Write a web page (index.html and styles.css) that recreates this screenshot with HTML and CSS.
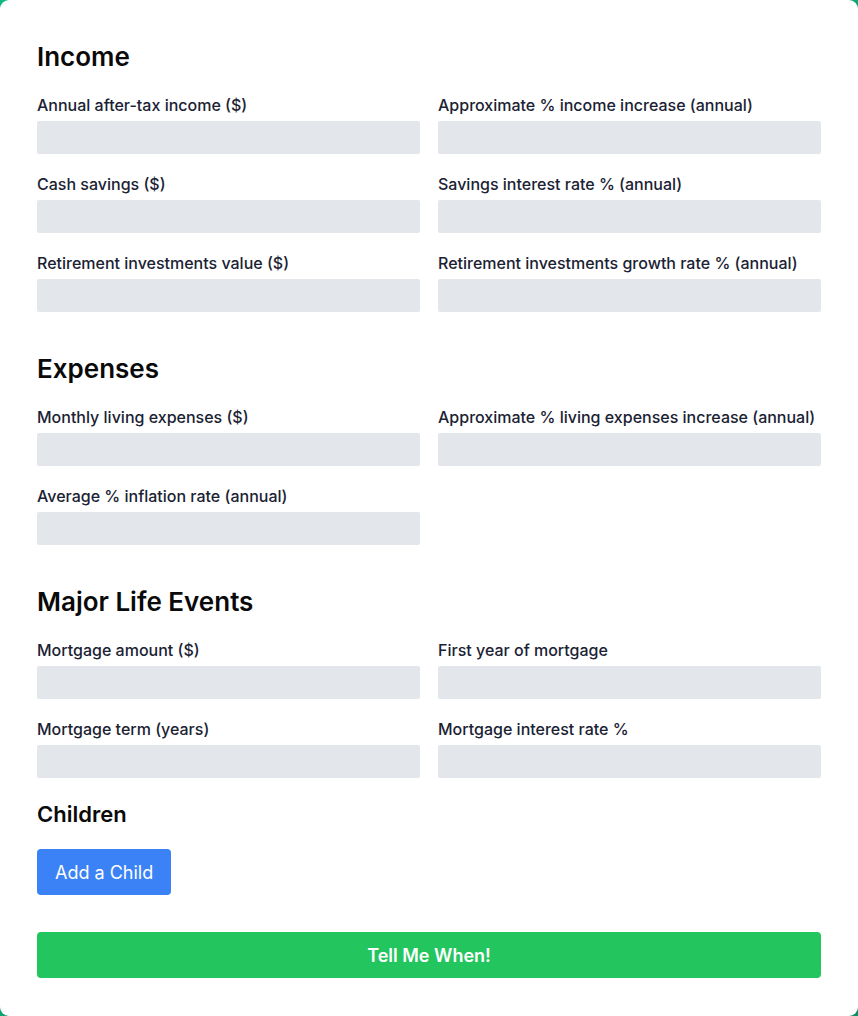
FILE: index.html
```html
<!DOCTYPE html>
<html lang="en">
<head>
  <meta charset="utf-8">
  <meta name="viewport" content="width=device-width, initial-scale=1">
  <title>Financial planner</title>
  <link rel="stylesheet" href="styles.css">
</head>
<body>
  <main class="card">
    <form class="form">
      <section class="section">
        <h2 class="section-title">Income</h2>
        <div class="fields">
          <div class="field">
            <label for="income">Annual after-tax income ($)</label>
            <input id="income" type="text" inputmode="decimal">
          </div>
          <div class="field">
            <label for="income-increase">Approximate % income increase (annual)</label>
            <input id="income-increase" type="text" inputmode="decimal">
          </div>
          <div class="field">
            <label for="savings">Cash savings ($)</label>
            <input id="savings" type="text" inputmode="decimal">
          </div>
          <div class="field">
            <label for="savings-rate">Savings interest rate % (annual)</label>
            <input id="savings-rate" type="text" inputmode="decimal">
          </div>
          <div class="field">
            <label for="retirement">Retirement investments value ($)</label>
            <input id="retirement" type="text" inputmode="decimal">
          </div>
          <div class="field">
            <label for="retirement-rate">Retirement investments growth rate % (annual)</label>
            <input id="retirement-rate" type="text" inputmode="decimal">
          </div>
        </div>
      </section>

      <section class="section">
        <h2 class="section-title">Expenses</h2>
        <div class="fields">
          <div class="field">
            <label for="expenses">Monthly living expenses ($)</label>
            <input id="expenses" type="text" inputmode="decimal">
          </div>
          <div class="field">
            <label for="expenses-increase">Approximate % living expenses increase (annual)</label>
            <input id="expenses-increase" type="text" inputmode="decimal">
          </div>
          <div class="field">
            <label for="inflation">Average % inflation rate (annual)</label>
            <input id="inflation" type="text" inputmode="decimal">
          </div>
        </div>
      </section>

      <section class="section">
        <h2 class="section-title">Major Life Events</h2>
        <div class="fields">
          <div class="field">
            <label for="mortgage">Mortgage amount ($)</label>
            <input id="mortgage" type="text" inputmode="decimal">
          </div>
          <div class="field">
            <label for="mortgage-year">First year of mortgage</label>
            <input id="mortgage-year" type="text" inputmode="numeric">
          </div>
          <div class="field">
            <label for="mortgage-term">Mortgage term (years)</label>
            <input id="mortgage-term" type="text" inputmode="numeric">
          </div>
          <div class="field">
            <label for="mortgage-rate">Mortgage interest rate %</label>
            <input id="mortgage-rate" type="text" inputmode="decimal">
          </div>
        </div>
        <h3 class="subsection-title">Children</h3>
        <button class="button button-add" type="button">Add a Child</button>
      </section>

      <button class="button button-submit" type="submit">Tell Me When!</button>
    </form>
  </main>
</body>
</html>
```
FILE: styles.css
```css
*,
*::before,
*::after {
  box-sizing: border-box;
}

body {
  margin: 0;
  background: linear-gradient(135deg, #10b981, #0d8f68);
  color: #0a0a0a;
  font-family: Inter, "Liberation Sans", sans-serif;
}

.card {
  min-height: 100vh;
  padding: 37px;
  background: #fff;
  border-radius: 9px;
}

.form {
  display: flex;
  flex-direction: column;
  gap: 37px;
}

.section-title {
  margin: 0 0 16px;
  font-size: 26px;
  font-weight: 600;
  line-height: 40px;
}

.fields {
  display: grid;
  grid-template-columns: repeat(2, minmax(0, 1fr));
  gap: 18px;
}

.field {
  display: flex;
  flex-direction: column;
  gap: 4px;
}

.field label {
  color: #1a2233;
  font-size: 16px;
  font-weight: 500;
  line-height: 24px;
}

.field input {
  width: 100%;
  height: 33px;
  padding: 4px 8px;
  border: 0;
  border-radius: 2px;
  background: #e3e6eb;
  color: inherit;
  font: inherit;
  font-size: 16px;
}

.subsection-title {
  margin: 19px 0 18px;
  font-size: 22px;
  font-weight: 600;
  line-height: 34px;
}

.button {
  height: 46px;
  padding: 0 18px;
  border: 0;
  border-radius: 4px;
  color: #fff;
  font: inherit;
  font-size: 18px;
  cursor: pointer;
}

.button-add {
  display: block;
  background: #3b82f6;
}

.button-submit {
  background: #22c55e;
  font-weight: 600;
}
```
